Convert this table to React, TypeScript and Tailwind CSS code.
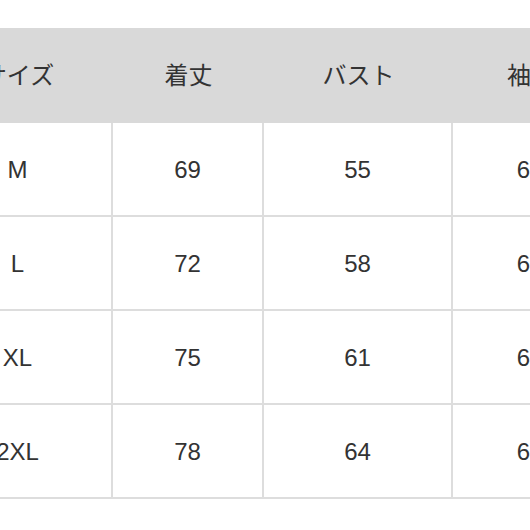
import React from "react";

const headers = ["サイズ", "着丈", "バスト", "袖丈"];
const rows = [
  ["M", "69", "55", "60"],
  ["L", "72", "58", "61"],
  ["XL", "75", "61", "62"],
  ["2XL", "78", "64", "63"],
];
const widths = ["w-[189px]", "w-[151px]", "w-[189px]", "w-[156px]"];

export default function App() {
  return (
    <div
      className="w-[530px] h-[530px] overflow-hidden bg-white pt-[28px]"
      style={{ fontFamily: '"Liberation Sans", "Noto Sans CJK JP", sans-serif' }}
    >
      <div className="ml-[-76px] w-max text-[24px] text-[#333333]">
        <div className="flex h-[95px] bg-[#d9d9d9]">
          {headers.map((h, i) => (
            <div key={i} className={`${widths[i]} flex items-center justify-center`}>
              {h}
            </div>
          ))}
        </div>
        {rows.map((r, ri) => (
          <div key={ri} className="flex h-[94px]">
            {r.map((c, ci) => (
              <div
                key={ci}
                className={`${widths[ci]} flex items-center justify-center border-r-2 border-b-2 border-[#dddddd] pt-[2px]`}
              >
                {c}
              </div>
            ))}
          </div>
        ))}
      </div>
    </div>
  );
}
